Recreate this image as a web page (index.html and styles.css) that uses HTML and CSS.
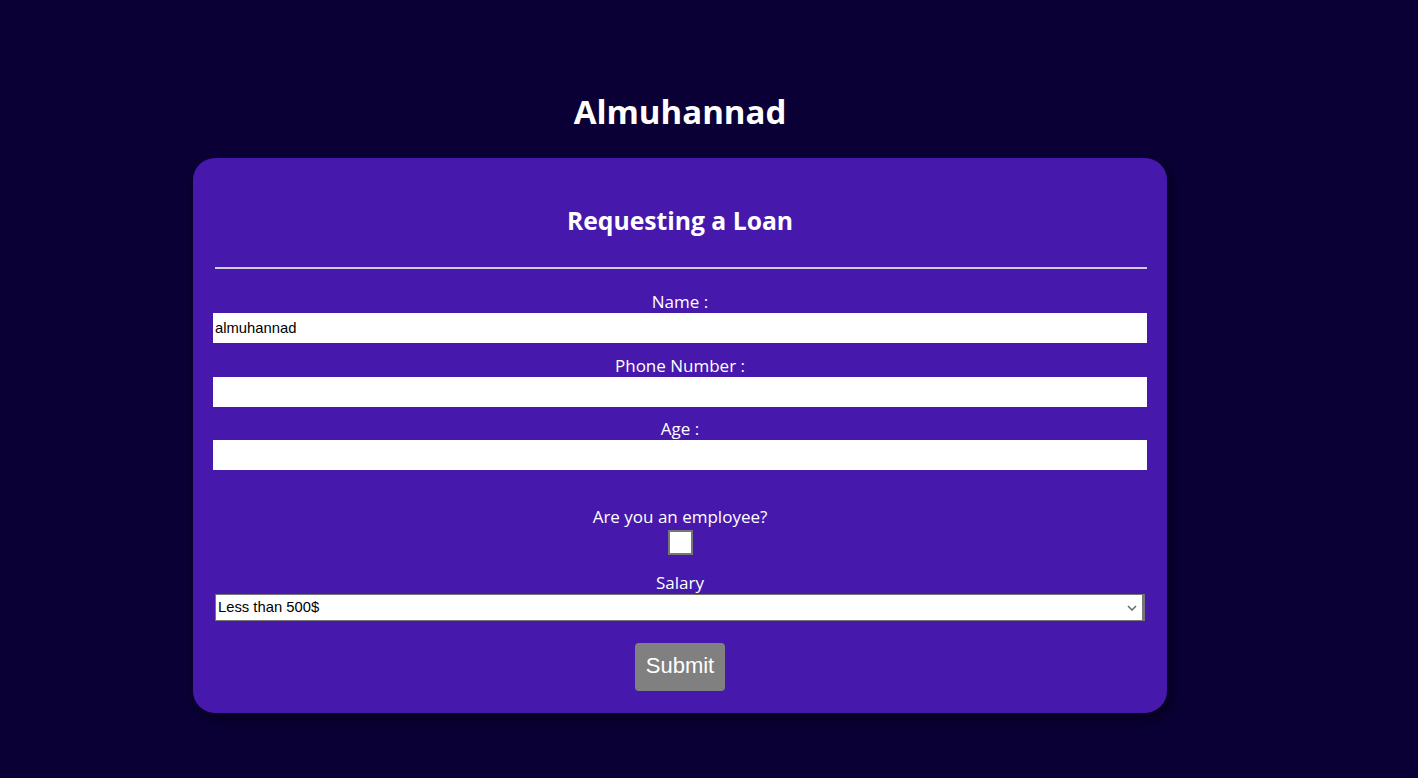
FILE: index.html
```html
<!DOCTYPE html>
<html>
<head>
<meta charset="utf-8">
<title>Almuhannad</title>
<link rel="stylesheet" href="styles.css">
</head>
<body>
<div class="page">
  <h1 class="brand">Almuhannad</h1>
  <div class="card">
    <h2 class="card-title">Requesting a Loan</h2>
    <hr class="divider">
    <form class="form">
      <label class="field-label" for="name">Name :</label>
      <input class="text-input" id="name" type="text" value="almuhannad">
      <label class="field-label" for="phone">Phone Number :</label>
      <input class="text-input" id="phone" type="text">
      <label class="field-label" for="age">Age :</label>
      <input class="text-input" id="age" type="text">
      <label class="field-label employee-label" for="emp">Are you an employee?</label>
      <input class="check" id="emp" type="checkbox">
      <label class="field-label salary-label" for="salary">Salary</label>
      <div class="select-wrap">
        <select class="select" id="salary">
          <option>Less than 500$</option>
        </select>
        <svg class="chevron" width="10" height="6" viewBox="0 0 10 6" aria-hidden="true">
          <path d="M1 1 L5 5 L9 1" fill="none" stroke="#6d6d6d" stroke-width="1.6"/>
        </svg>
      </div>
      <button class="submit" type="button">Submit</button>
    </form>
  </div>
</div>
</body>
</html>
```
FILE: styles.css
```css
html, body {
  margin: 0;
  padding: 0;
}
body {
  background: #0a0035;
  color: #ffffff;
  font-family: "Open Sans", "Noto Sans", sans-serif;
}
.page {
  width: 1360px;
  padding-top: 93px;
  padding-bottom: 40px;
}
.brand {
  margin: 0 0 27px 0;
  text-align: center;
  font-size: 33px;
  line-height: 38px;
  font-weight: 700;
}
.card {
  width: 934px;
  margin: 0 auto;
  padding: 48px 20px 22px 20px;
  background: #4618ac;
  border-radius: 22px;
  box-shadow: 4px 6px 12px rgba(0, 0, 0, 0.45);
}
.card-title {
  margin: 0;
  text-align: center;
  font-size: 24.7px;
  line-height: 30px;
  font-weight: 700;
}
.divider {
  margin: 31px 0 0 2px;
  width: 932px;
  border: 0;
  height: 2px;
  background: #d0cce0;
}
.form {
  display: flex;
  flex-direction: column;
  align-items: center;
  padding-top: 22px;
}
.field-label {
  display: block;
  font-size: 17px;
  line-height: 22px;
  text-align: center;
}
.text-input {
  box-sizing: border-box;
  width: 934px;
  height: 30px;
  margin: 0 0 11.5px 0;
  border: 0;
  padding: 0 2px;
  background: #ffffff;
  font-family: "Liberation Sans", Arial, sans-serif;
  font-size: 14.8px;
  color: #000;
  outline: none;
}
.employee-label {
  margin-top: 24px;
}
.check {
  appearance: none;
  -webkit-appearance: none;
  box-sizing: border-box;
  width: 25px;
  height: 25px;
  margin: 2px 0 0 0;
  border: 2px solid #767676;
  background: #ffffff;
}
.salary-label {
  margin-top: 17px;
}
.select-wrap {
  position: relative;
  width: 930px;
  height: 27px;
}
.select {
  appearance: none;
  -webkit-appearance: none;
  box-sizing: border-box;
  width: 930px;
  height: 27px;
  margin: 0;
  border: 1px solid #767676;
  border-right: 3px solid #767676;
  border-radius: 0;
  background: #ffffff;
  color: #000;
  font-family: "Liberation Sans", Arial, sans-serif;
  font-size: 14.8px;
  padding: 0 0 0 2px;
}
.chevron {
  position: absolute;
  right: 8px;
  top: 11px;
}
.submit {
  margin-top: 22px;
  width: 90px;
  height: 48px;
  border: 0;
  border-radius: 4px;
  background: #808080;
  color: #ffffff;
  font-family: "Liberation Sans", Arial, sans-serif;
  font-size: 22px;
  padding: 0 0 2px 0;
}
```
